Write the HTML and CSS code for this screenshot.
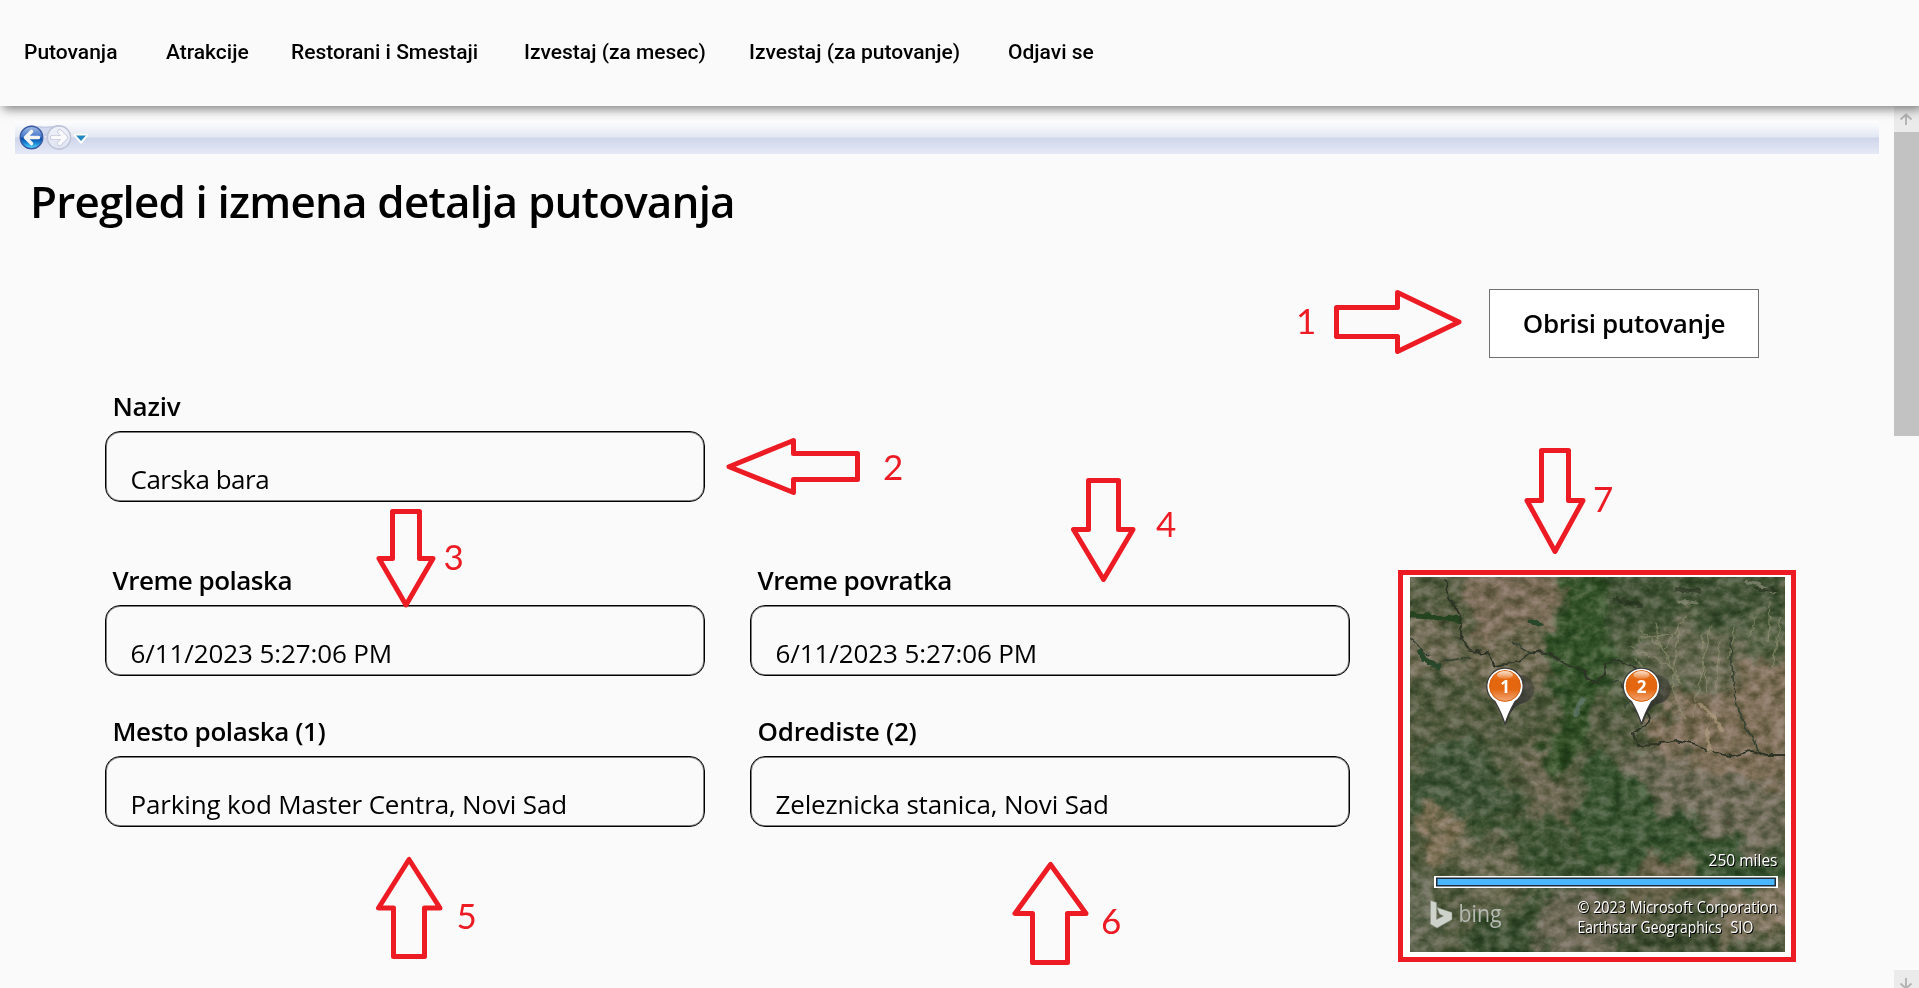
FILE: index.html
```html
<!DOCTYPE html>
<html lang="sr">
<head>
<meta charset="utf-8">
<title>Pregled i izmena detalja putovanja</title>
<link rel="stylesheet" href="styles.css">
</head>
<body>
<header class="menu">
  <span class="m1">Putovanja</span>
  <span class="m2">Atrakcije</span>
  <span class="m3">Restorani i Smestaji</span>
  <span class="m4">Izvestaj (za mesec)</span>
  <span class="m5">Izvestaj (za putovanje)</span>
  <span class="m6">Odjavi se</span>
</header>
<div class="frame">
  <main class="page">
    <div class="navbar">
      <svg width="80" height="33" viewBox="0 0 80 33">
        <defs>
          <linearGradient id="back" x1="0" y1="0" x2="0" y2="1">
            <stop offset="0" stop-color="#a9bfe6"/><stop offset=".48" stop-color="#3f74cb"/>
            <stop offset=".52" stop-color="#0c479f"/><stop offset=".75" stop-color="#1c86d6"/><stop offset="1" stop-color="#5fe6ff"/>
          </linearGradient>
          <linearGradient id="fwd" x1="0" y1="0" x2="0" y2="1">
            <stop offset="0" stop-color="#f1f3fa"/><stop offset="1" stop-color="#dfe3f1"/>
          </linearGradient>
        </defs>
        <path d="M16 4.500Q30 8 44 4.500L44 14H16z" fill="#d3daee" stroke="#b6c0df"/>
        <circle cx="16.500" cy="16.500" r="12.300" fill="#e9edf8"/>
        <circle cx="16.500" cy="16.500" r="11.300" fill="url(#back)" stroke="#3a5ba2" stroke-width="1.400"/>
        <path d="M23.500 16.500H11M16.500 10.500l-6 6 6 6" fill="none" stroke="#f4f4f4" stroke-width="3.600" stroke-linecap="round" stroke-linejoin="round"/>
        <circle cx="44" cy="16.500" r="11.600" fill="url(#fwd)" stroke="#bfc4d8" stroke-width="1.600"/>
        <path d="M37.500 16.500H49M44.500 10.500l6 6-6 6" fill="none" stroke="#c3c7da" stroke-width="5" stroke-linecap="round" stroke-linejoin="round"/>
        <path d="M37.500 16.500H49M44.500 10.500l6 6-6 6" fill="none" stroke="#fbfbfd" stroke-width="3.400" stroke-linecap="round" stroke-linejoin="round"/>
        <path d="M60 14h12l-6 7.500z" fill="#fff" stroke="#fff" stroke-width="2.500" stroke-linejoin="round"/>
        <path d="M61 14.500h10l-5 5.500z" fill="#2488c0"/>
      </svg>
    </div>
    <h1 class="title">Pregled i izmena detalja putovanja</h1>
    <div class="actions"><button class="delete">Obrisi putovanje</button></div>
    <div class="details">
      <div class="fields">
        <label class="field first"><span class="label l1">Naziv</span><span class="box"><span class="v1">Carska bara</span></span></label>
        <label class="field"><span class="label l2">Vreme polaska</span><span class="box"><span class="v2">6/11/2023 5:27:06 PM</span></span></label>
        <label class="field"><span class="label l3">Vreme povratka</span><span class="box"><span class="v2">6/11/2023 5:27:06 PM</span></span></label>
        <label class="field last"><span class="label l4">Mesto polaska (1)</span><span class="box"><span class="v3">Parking kod Master Centra, Novi Sad</span></span></label>
        <label class="field last"><span class="label l5">Odrediste (2)</span><span class="box"><span class="v4">Zeleznicka stanica, Novi Sad</span></span></label>
      </div>
      <div class="mapframe">
        <svg class="map" width="375" height="375" viewBox="0 0 375 375">
          <defs>
            <filter id="soft" x="-30%" y="-30%" width="160%" height="160%"><feGaussianBlur stdDeviation="5"/></filter>
            <filter id="rough" filterUnits="userSpaceOnUse" x="-30" y="-30" width="435" height="435" color-interpolation-filters="sRGB">
              <feTurbulence type="fractalNoise" baseFrequency=".03" numOctaves="5" seed="7" result="n"/>
              <feDisplacementMap in="SourceGraphic" in2="n" scale="60" xChannelSelector="R" yChannelSelector="G"/>
            </filter>
            <filter id="wob" filterUnits="userSpaceOnUse" x="-10" y="-10" width="395" height="395" color-interpolation-filters="sRGB">
              <feTurbulence type="fractalNoise" baseFrequency=".12" numOctaves="2" seed="3" result="n"/>
              <feDisplacementMap in="SourceGraphic" in2="n" scale="7" xChannelSelector="R" yChannelSelector="G"/>
            </filter>
            <filter id="grain" x="0" y="0" width="100%" height="100%" color-interpolation-filters="sRGB">
              <feTurbulence type="fractalNoise" baseFrequency=".08 .1" numOctaves="5" seed="11"/>
              <feColorMatrix values="2 0 0 0 -.47  1.500 0 0 0 -.22  1.900 0 0 0 -.42  0 0 0 0 1"/>
            </filter>
            <linearGradient id="orange" x1="0" y1="0" x2="0" y2="1">
              <stop offset="0" stop-color="#f08a3c"/><stop offset=".3" stop-color="#e4660e"/><stop offset=".6" stop-color="#e4660e"/><stop offset="1" stop-color="#f3a878"/>
            </linearGradient>
            <linearGradient id="shine" x1="0" y1="0" x2="0" y2="1">
              <stop offset="0" stop-color="#fff" stop-opacity=".75"/><stop offset="1" stop-color="#fff" stop-opacity=".1"/>
            </linearGradient>
            <linearGradient id="shade" x1="1" y1="0" x2="0" y2="1">
              <stop offset="0" stop-color="#333" stop-opacity=".35"/><stop offset="1" stop-color="#222" stop-opacity=".95"/>
            </linearGradient>
            <g id="pin">
              <path d="M1 0C5-12 8-18 17-21A14.500 14.500 0 1 0 4-45z" fill="url(#shade)"/>
              <path d="M0 0C-2-8-5-14-10-23A18.200 18.200 0 1 1 10-23C5-14 2-8 0 0z" fill="#fff" stroke="#3c3c3c" stroke-width="1.300"/>
              <circle cy="-38.500" r="15.400" fill="url(#orange)" stroke="#d9600f"/>
              <ellipse cy="-49.500" rx="8" ry="4" fill="url(#shine)"/>
            </g>
          </defs>
          <rect width="375" height="375" fill="#535b3f"/>
          <g filter="url(#rough)"><g filter="url(#soft)">
            <path d="M60-20h90l-5 80-60 30-30-40z" fill="#786b55"/>
            <path d="M-20 40h60l10 50-70 20z" fill="#6e6b53"/>
            <path d="M50 70l90-20 0 60-70 20z" fill="#6c6750"/>
            <path d="M150 0h45l15 30-5 60-15 50-20 40-25-5 5-60-15-40z" fill="#34522a"/>
            <path d="M190-15h190v60l-100 15-80 5z" fill="#435234"/>
            <path d="M200 60l70-20 110 0 10 60-120 15-70 20z" fill="#536042"/>
            <path d="M230 55l40-10 80 20-10 50-80-10z" fill="#65684f"/>
            <path d="M285 120l100-50v150l-90-5-40-25-25-40z" fill="#7b6d57"/>
            <path d="M210 170l80 20 95 15v60l-110 10-60-50z" fill="#6c6954"/>
            <path d="M130 150l30-25 20 10-5 45-40 10z" fill="#335027"/>
            <path d="M185 180l60 30 40 45 110 20v45l-110-10-70-10-60-30z" fill="#3a5430"/>
            <path d="M115 170l25 5 15 60 25 55-30 10-30-60z" fill="#6b664f"/>
            <path d="M10 165l70 0 25 70-60 25-60-20z" fill="#435637"/>
            <path d="M70 240l70 0 50 50 20 40-70 20-80-50z" fill="#3d5332"/>
            <path d="M20 230l35 10-5 35-30 5z" fill="#807259"/>
            <path d="M45 275l60-15 20 50-60 20z" fill="#686850"/>
            <path d="M220 285l60 0 10 20-45 35-30-15z" fill="#6a644b"/>
            <path d="M300 325l90-20v55l-70-5z" fill="#80745f"/>
            <path d="M-10 300l30 5 10 80-45 0z" fill="#60664f"/>
            <path d="M50 340l80 0 10 45-90 0z" fill="#3d5131"/>
            <path d="M130 330l60-20 30 40-30 40-60-10z" fill="#6c6855"/>
            <path d="M200 350l100-20 40 50-140 10z" fill="#445135"/>
          </g></g>
          <rect class="grain" width="375" height="375" filter="url(#grain)"/>
          <g fill="none" filter="url(#wob)" stroke-linecap="round">
            <g stroke="#9b9a7a" stroke-width="1.300" opacity=".55">
              <path d="M233 55l20 18 18 35M245 45l5 25M275 40l-20 32M220 70l42 20M268 52l-5 60 12 30M300 50l-5 30-12 60M310 65l-5 50M325 50l-8 35M345 40l-5 20M360 25l-2 40M372 40l-10 50M230 62l30-5M225 80l30 40M292 58l5 60"/>
            </g>
            <path d="M0 38l50 4" stroke="#24441f" stroke-width="6"/>
            <path d="M10 74l8 12 10 3M120 44l10 3" stroke="#28462a" stroke-width="5"/>
            <path d="M36 2l3 18 12 22 0 18 8 14 18 2 8 14 24-5 14-10 16 1 18 12 16 4 4 12 12 2 8-20 14-3 18 10 7 18-4 16 8 15-4 6-13 8 5 12 18-1 20-4 16 3 22 10 17 3 20-5 17 4h18" stroke="#2d3426" stroke-width="1.800"/>
            <path d="M199 107l8-4 14 18-5 10M320 60l3 40 5 35 12 20 8 20M100 62l20 14M0 62l20 18M30 85l30-5" stroke="#354131" stroke-width="1.600"/>
            <path d="M292 128l10 12 10 12M296 152l4 22" stroke="#b5a384" stroke-width="4" opacity=".6"/>
            <path d="M268 24l20 2M335 4l18 5 12 6" stroke="#aaa394" stroke-width="3" opacity=".5"/>
            <path d="M265 12l24 3M205 22l25 6M345 12l20 0" stroke="#222c1b" stroke-width="4" opacity=".6"/>
            <path d="M173 122l-8 16" stroke="#657b76" stroke-width="5" opacity=".6"/>
          </g>
          <use href="#pin" x="95" y="147.500"/>
          <use href="#pin" x="231.500" y="147.500"/>
          <g class="pinnum"><text x="95" y="116">1</text><text x="231.500" y="116">2</text></g>
          <g class="scale">
            <text class="miles" x="367.500" y="289" text-anchor="end" textLength="69" lengthAdjust="spacingAndGlyphs">250 miles</text>
            <text x="167.500" y="335.500" textLength="200" lengthAdjust="spacingAndGlyphs">© 2023 Microsoft Corporation</text>
            <text x="167.500" y="355.500" textLength="144" lengthAdjust="spacingAndGlyphs">Earthstar Geographics</text>
            <text x="320.500" y="355.500" textLength="23" lengthAdjust="spacingAndGlyphs">SIO</text>
          </g>
          <rect x="24" y="299" width="344" height="12" fill="#fff"/>
          <rect x="26" y="300.500" width="340" height="9" fill="#1d2b38"/>
          <rect x="27.500" y="302" width="337" height="6" fill="#4ab6fb"/>
          <path d="M20.500 323.500l6 2v17l7-3.500-4-2-2.500-6.500 15 5v7L27 351l-6.500-4z" fill="#cdd2ca" stroke="#8c9387" stroke-width=".5"/>
          <text class="bing" x="48.500" y="345" textLength="43" lengthAdjust="spacingAndGlyphs">bing</text>
        </svg>
      </div>
    </div>
  </main>
  <div class="scrollbar">
    <svg class="sbtn" width="25" height="26" viewBox="0 0 25 26"><path d="M12 19V9M6.500 13.500L12 8.500l5.500 5" fill="none" stroke="#b5b5b5" stroke-width="2"/></svg>
    <div class="thumb"></div>
    <svg class="sbtn" width="25" height="18" viewBox="0 0 25 18"><path d="M12 8V18M6.500 13.500L12 18.500l5.500-5" fill="none" stroke="#b5b5b5" stroke-width="2"/></svg>
  </div>
</div>
<svg class="notes" width="1919" height="988" viewBox="0 0 1919 988">
  <g fill="none" stroke="#ed1c24" stroke-width="5" stroke-linejoin="round">
    <path d="M1336.500 307.500H1397.500V292.500L1459 322 1397.500 351.500V336.500H1336.500z"/>
    <path d="M857.500 453.500H793.500V440.500L729 466.700 793.500 492.500V479.500H857.500z"/>
    <path d="M392.500 511.500H419.500V558.500H433L406 605 379 558.500H392.500z"/>
    <path d="M1088.500 480.500H1118.500V529.500H1133L1103.500 579.500 1073.500 529.500H1088.500z"/>
    <path d="M393.500 956.500H424.500V908H440L409 859.500 378.500 908H393.500z"/>
    <path d="M1032.500 962.500H1067.500V913.500H1086L1050.500 864.500 1015 913.500H1032.500z"/>
    <path d="M1541.500 450.500H1568.500V500.500H1583L1555 551.500 1527 500.500H1541.500z"/>
  </g>
  <g class="digits">
    <text x="1296" y="334">1</text><text x="883" y="480">2</text><text x="443.500" y="569.500">3</text>
    <text x="1156" y="536.500">4</text><text x="456.500" y="929">5</text><text x="1101" y="933.500">6</text><text x="1593" y="511.500">7</text>
  </g>
</svg>
</body>
</html>
```
FILE: styles.css
```css
* { box-sizing: border-box; }
body {
  margin: 0;
  width: 1919px;
  height: 988px;
  overflow: hidden;
  background: #fafafa;
  color: #000;
  font-family: "Open Sans", "Noto Sans", sans-serif;
}
.menu {
  position: relative;
  z-index: 1;
  display: flex;
  align-items: center;
  height: 106px;
  padding: 0 0 2px 24px;
  background: #fafafa;
  box-shadow: 3px 3px 10px 0 rgba(0, 0, 0, .5);
  font: 500 21px/24px Roboto, sans-serif;
  white-space: nowrap;
}
.m1 { width: 142px; }
.m2 { width: 125px; }
.m3 { width: 233px; }
.m4 { width: 225px; }
.m5 { width: 259px; }
.frame { display: flex; height: 882px; }
.page { width: 1894px; padding: 15px 0 0 15px; }
.navbar {
  width: 1864px;
  height: 33px;
  background: linear-gradient(#fff, #e2e7f3 48%, #cfd6ea 52%, #e6e9f7);
}
.navbar svg { display: block; }
.title {
  margin: 17px 0 0 15px;
  font-size: 44px;
  line-height: 60px;
  font-weight: 600;
  letter-spacing: -.83px;
  white-space: nowrap;
}
.actions { display: flex; justify-content: flex-end; padding: 58px 135px 0 0; }
.delete {
  width: 270px;
  height: 69px;
  padding: 0 0 1px;
  border: 1px solid #707070;
  background: #fff;
  color: #000;
  font: 600 26px/36px "Open Sans", sans-serif;
  letter-spacing: -.38px;
  white-space: nowrap;
}
.details { display: flex; padding-left: 90px; }
.fields {
  display: grid;
  grid-template-columns: 600px 600px;
  grid-template-rows: 174px 151px 120px;
  column-gap: 45px;
  padding-top: 30px;
}
.first { grid-column: 1 / 3; width: 600px; }
.field { display: block; white-space: nowrap; }
.label {
  display: block;
  height: 43px;
  padding-left: 7.5px;
  font-size: 26px;
  line-height: 36px;
  font-weight: 600;
  letter-spacing: -.5px;
}
.l1, .l5 { letter-spacing: -.25px; }
.l4 { letter-spacing: -.4px; }
.box {
  display: block;
  height: 71px;
  padding: 29px 0 0 24.5px;
  border: 1px solid #000;
  border-radius: 15px;
  box-shadow: inset 0 0 0 1px rgba(0, 0, 0, .5);
  font-size: 26px;
  line-height: 36px;
}
.v1 { letter-spacing: -.5px; }
.v2 { letter-spacing: -.1px; }
.v3, .v4 { letter-spacing: -.16px; }
.mapframe {
  width: 398px;
  height: 392px;
  margin: 212px 0 0 48px;
  padding: 2px 0 0 7px;
  border: 5px solid #ed1c24;
  background: #fff;
}
.map { display: block; }
.grain { opacity: .5; mix-blend-mode: soft-light; }
.pinnum { font: 700 17px "Open Sans", sans-serif; fill: #fff; text-anchor: middle; }
.scale { font-size: 15.5px; fill: #fff; filter: drop-shadow(1px 1px 0 #000); }
.miles { font-size: 17px; }
.bing { font-size: 24px; fill: #b4b9b2; }
.scrollbar { display: flex; flex-direction: column; width: 25px; }
.sbtn { display: block; background: #ebebeb; }
.thumb { height: 304px; margin-bottom: auto; background: #c2c2c2; }
.notes { position: absolute; left: 0; top: 0; z-index: 2; pointer-events: none; }
.digits { font: 35px Lato, sans-serif; fill: #ed1c24; }
```
